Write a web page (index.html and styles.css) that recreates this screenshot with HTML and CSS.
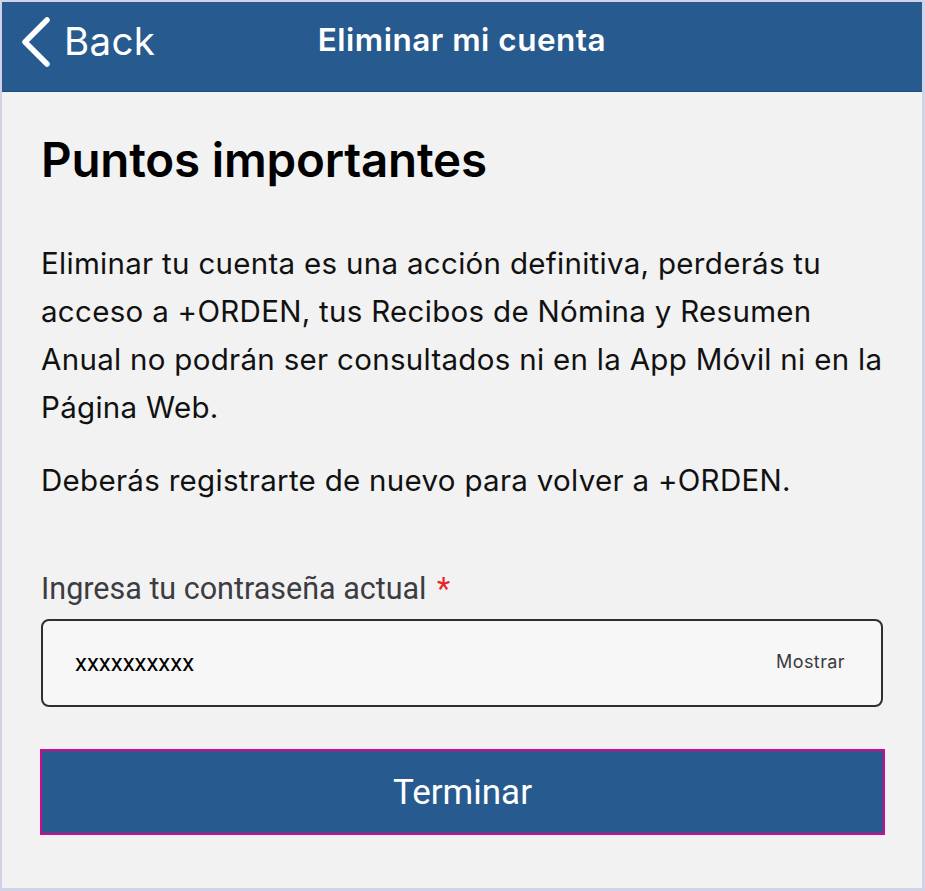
FILE: index.html
```html
<!DOCTYPE html>
<html lang="es">
<head>
<meta charset="utf-8">
<title>Eliminar mi cuenta</title>
<link rel="stylesheet" href="styles.css">
</head>
<body>
<div class="frame">
  <header class="navbar">
    <a class="back" href="#">
      <svg class="chev" width="34" height="50" viewBox="0 0 34 50"><path d="M28 3 L6 25 L28 47" fill="none" stroke="#fff" stroke-width="5.5" stroke-linecap="round" stroke-linejoin="round"/></svg>
      <span class="back-label">Back</span>
    </a>
    <h1 class="nav-title">Eliminar mi cuenta</h1>
  </header>
  <main class="content">
    <h2 class="title">Puntos importantes</h2>
    <p class="text">Eliminar tu cuenta es una acción definitiva, perderás tu acceso a +ORDEN, tus Recibos de Nómina y Resumen Anual no podrán ser consultados ni en la App Móvil ni en la Página Web.</p>
    <p class="text">Deberás registrarte de nuevo para volver a +ORDEN.</p>
    <label class="label">Ingresa tu contraseña actual <span class="req">*</span></label>
    <div class="input">
      <span class="value">xxxxxxxxxx</span>
      <span class="show">Mostrar</span>
    </div>
    <button class="btn">Terminar</button>
  </main>
</div>
</body>
</html>
```
FILE: styles.css
```css
* { box-sizing: border-box; }
html, body { margin: 0; padding: 0; }
body {
  width: 925px;
  height: 891px;
  background: #d2d2e8;
  font-family: Inter, "Noto Sans", sans-serif;
}
.frame {
  width: 925px;
  height: 891px;
  border-style: solid;
  border-color: #d2d2e8;
  border-width: 2px 3px 3px 2px;
  background: #f2f2f2;
  display: flex;
  flex-direction: column;
}
.navbar {
  flex-shrink: 0;
  height: 90px;
  background: #275a8e;
  border-bottom: 1px solid #1f4c7a;
  position: relative;
  display: flex;
  align-items: center;
  justify-content: center;
}
.back {
  position: absolute;
  left: 17px;
  top: 14px;
  display: flex;
  align-items: center;
  gap: 11px;
  color: #fff;
  text-decoration: none;
}
.chev { display: block; }
.back-label {
  font-size: 38.5px;
  font-weight: 400;
  letter-spacing: 0.3px;
  line-height: 50px;
  padding-bottom: 2px;
}
.nav-title {
  margin: 0 0 15px 0;
  color: #fff;
  font-size: 31.5px;
  font-weight: 600;
  letter-spacing: 0.5px;
}
.content {
  padding: 36px 39px 0 39px;
  display: flex;
  flex-direction: column;
}
.title {
  margin: 0 0 47px 0;
  font-size: 47.5px;
  font-weight: 600;
  color: #000;
  line-height: 64px;
  letter-spacing: -0.2px;
}
.text {
  margin: 0 0 25px 0;
  font-size: 29.5px;
  line-height: 48px;
  color: #111;
  letter-spacing: 0.3px;
}
.label {
  margin-top: 42px;
  font-family: Roboto, "Noto Sans", sans-serif;
  font-size: 30.5px;
  color: #3c3c43;
  line-height: 36px;
}
.req { color: #e8262a; margin-left: 3px; }
.input {
  flex-shrink: 0;
  margin-top: 12px;
  height: 88px;
  border: 2px solid #2f2f33;
  border-radius: 8px;
  background: #f7f7f7;
  display: flex;
  align-items: center;
  justify-content: space-between;
  padding: 0 36px 0 32px;
}
.value {
  font-family: Roboto, "Noto Sans", sans-serif;
  font-size: 24px;
  color: #000;
}
.show {
  font-family: Inter, "Noto Sans", sans-serif;
  font-size: 18px;
  color: #3a3a3e;
  letter-spacing: 0.4px;
  padding-bottom: 4px;
}
.btn {
  flex-shrink: 0;
  margin-top: 42px;
  margin-left: -1px;
  margin-right: -2px;
  height: 86px;
  border: 2px solid #d4088c;
  background: #275a8e;
  color: #fff;
  font-family: Roboto, "Noto Sans", sans-serif;
  font-size: 35px;
  padding: 0;
}
```
